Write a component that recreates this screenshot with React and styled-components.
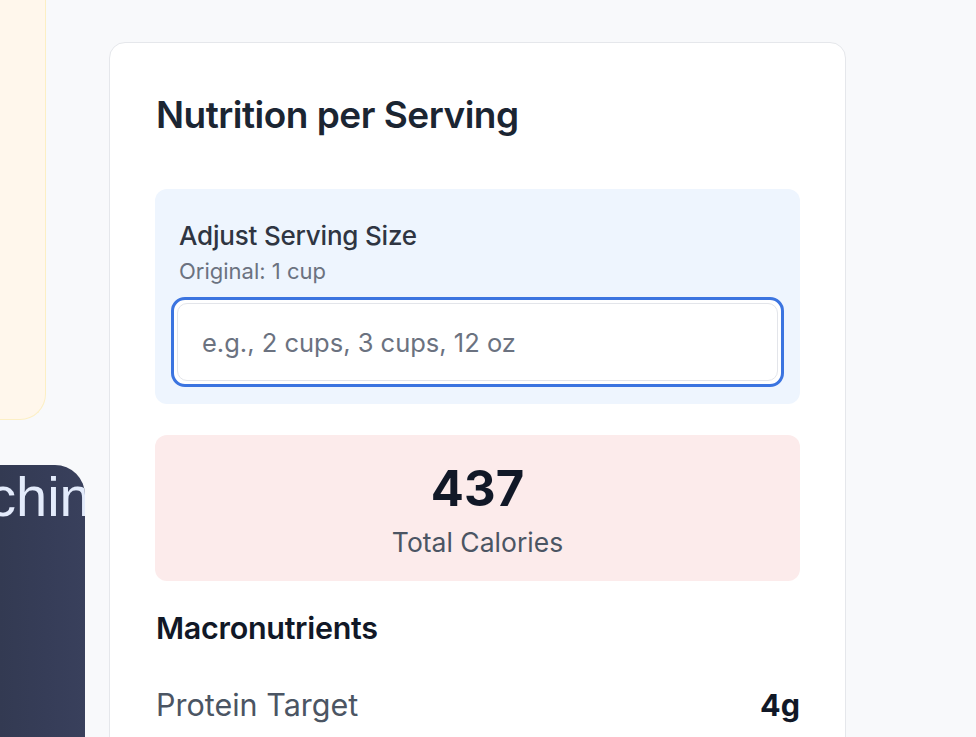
import React from 'react';
import styled, { createGlobalStyle } from 'styled-components';

const GlobalStyle = createGlobalStyle`
  html, body {
    margin: 0;
    padding: 0;
    background: #f8f9fb;
    font-family: Inter, "Noto Sans", "Liberation Sans", sans-serif;
    overflow: hidden;
  }
`;

const Page = styled.div`
  width: 976px;
  height: 737px;
  display: grid;
  grid-template-columns: 109px 737px;
  overflow: hidden;
`;

const LeftColumn = styled.div`
  display: flex;
  flex-direction: column;
  gap: 45px;
`;

const NoteCard = styled.div`
  width: 46px;
  height: 420px;
  background: #fff7ec;
  border: 1px solid #fcefc4;
  border-left: none;
  border-top: none;
  border-radius: 0 0 26px 0;
  box-sizing: border-box;
`;

const DarkCard = styled.div`
  width: 85px;
  flex: 1;
  background: linear-gradient(90deg, #333a52 0%, #363d58 55%, #39405c 100%);
  border-radius: 0 30px 0 0;
  overflow: hidden;
  color: #e3ebfb;
  font-family: "Liberation Sans", Arial, sans-serif;
  font-size: 56px;
  line-height: 1;
  white-space: nowrap;
  padding-top: 4px;
  text-indent: -12px;
`;

const Card = styled.div`
  margin-top: 42px;
  background: #fff;
  border: 1px solid #e5e7eb;
  border-radius: 16px;
  padding: 48px 45px 0 45px;
  box-sizing: border-box;
  height: 720px;
`;

const Title = styled.h2`
  margin: 0 0 50px 1px;
  font-size: 37px;
  font-weight: 600;
  color: #1b2532;
  letter-spacing: -0.5px;
  line-height: 48px;
`;

const AdjustBox = styled.div`
  background: #eef5fe;
  border-radius: 12px;
  padding: 32px 16px 17px 16px;
`;

const AdjustLabel = styled.div`
  margin-left: 8px;
  font-size: 26px;
  font-weight: 500;
  color: #2f3542;
  line-height: 30px;
  letter-spacing: -0.2px;
`;

const AdjustSub = styled.div`
  margin: 6px 0 12px 8px;
  font-size: 22px;
  color: #6b7280;
  line-height: 28px;
`;

const InputRing = styled.div`
  border: 3px solid #3b74e0;
  border-radius: 14px;
  padding: 3px;
  background: #fff;
`;

const Input = styled.input`
  display: block;
  width: 100%;
  box-sizing: border-box;
  height: 78px;
  border: 1px solid #e3e5ea;
  border-radius: 10px;
  padding: 0 24px;
  font-family: inherit;
  font-size: 25.5px;
  color: #1f2937;
  outline: none;
  caret-color: #111;

  &::placeholder {
    color: #6b7280;
  }
`;

const CaloriesBox = styled.div`
  margin-top: 31px;
  background: #fcebeb;
  border-radius: 12px;
  height: 146px;
  display: flex;
  flex-direction: column;
  align-items: center;
  justify-content: center;
`;

const CalNumber = styled.div`
  font-size: 49px;
  font-weight: 700;
  color: #111827;
  line-height: 54px;
  margin-top: 4px;
`;

const CalLabel = styled.div`
  margin-top: 10px;
  font-size: 26.5px;
  color: #4b5563;
  line-height: 32px;
`;

const SectionTitle = styled.h3`
  margin: 28px 0 0 1px;
  font-size: 30.5px;
  font-weight: 600;
  color: #111827;
  line-height: 38px;
  letter-spacing: -0.3px;
`;

const MacroRow = styled.div`
  display: flex;
  justify-content: space-between;
  align-items: center;
  margin-top: 39px;
  font-size: 30.5px;
  line-height: 38px;
`;

const MacroName = styled.span`
  color: #4b5563;
  margin-left: 1px;
`;

const MacroValue = styled.span`
  font-weight: 700;
  color: #111827;
`;

export default function App() {
  return (
    <>
      <GlobalStyle />
      <Page>
        <LeftColumn>
          <NoteCard />
          <DarkCard>chin</DarkCard>
        </LeftColumn>
        <Card>
          <Title>Nutrition per Serving</Title>
          <AdjustBox>
            <AdjustLabel>Adjust Serving Size</AdjustLabel>
            <AdjustSub>Original: 1 cup</AdjustSub>
            <InputRing>
              <Input autoFocus placeholder="e.g., 2 cups, 3 cups, 12 oz" />
            </InputRing>
          </AdjustBox>
          <CaloriesBox>
            <CalNumber>437</CalNumber>
            <CalLabel>Total Calories</CalLabel>
          </CaloriesBox>
          <SectionTitle>Macronutrients</SectionTitle>
          <MacroRow>
            <MacroName>Protein Target</MacroName>
            <MacroValue>4g</MacroValue>
          </MacroRow>
        </Card>
      </Page>
    </>
  );
}
